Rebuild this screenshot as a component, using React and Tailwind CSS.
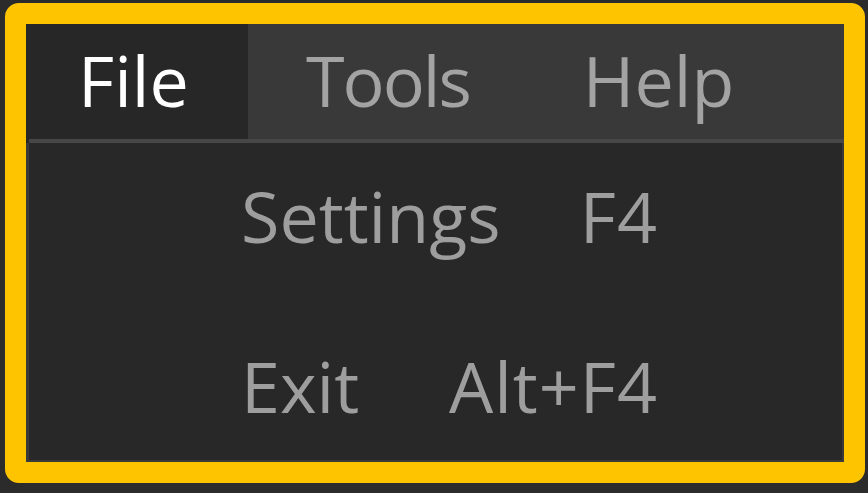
import React from "react";

const font = { fontFamily: '"Open Sans", "Noto Sans", sans-serif' };

function MenuItem({ label, active, className }) {
  return (
    <div
      className={
        "flex items-center h-full pb-[4px] text-[70px] leading-none " +
        (active ? "bg-[#272727] text-white " : "text-[#a3a3a3] ") +
        className
      }
    >
      {label}
    </div>
  );
}

function DropRow({ label, shortcut, className }) {
  return (
    <div className={"flex justify-between w-[417px] ml-[212px] text-[70px] leading-none text-[#9e9e9e] " + className}>
      <span>{label}</span>
      <span className="tracking-[1px]">{shortcut}</span>
    </div>
  );
}

export default function App() {
  return (
    <div className="w-[868px] h-[493px] bg-[#2b2b2b] pl-[5px] pt-[3px] pr-[3px] pb-[10px]" style={font}>
      <div className="h-full border-[21px] border-[#ffc400] rounded-[14px] flex flex-col bg-[#282828] overflow-hidden">
        <div className="h-[115px] flex bg-[#393939]">
          <MenuItem label="File" active className="w-[222px] pl-[52px]" />
          <MenuItem label="Tools" className="pl-[58px] tracking-[-2px]" />
          <MenuItem label="Help" className="pl-[113px]" />
        </div>
        <div className="h-[4px] bg-[#474747] ml-[3px]" />
        <div className="flex-1 bg-[#282828] border-l-[3px] border-r-[2px] border-b-[2px] border-[#3a3a3a] flex flex-col">
          <DropRow label="Settings" shortcut="F4" className="mt-[38px]" />
          <DropRow label="Exit" shortcut="Alt+F4" className="mt-[100px]" />
        </div>
      </div>
    </div>
  );
}
